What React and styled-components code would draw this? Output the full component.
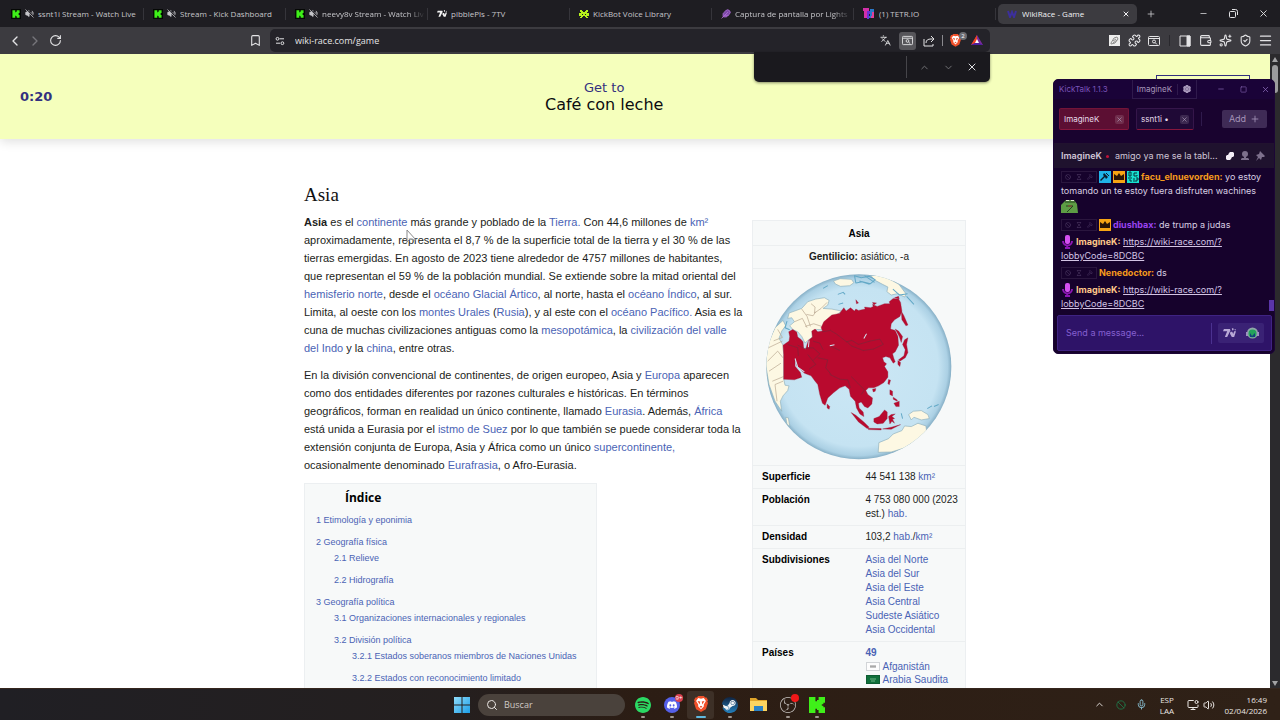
import React from "react";
import styled, { createGlobalStyle, css } from "styled-components";
import {
  ChevronLeft, ChevronRight, RotateCw, Bookmark, VolumeOff, X, Plus, Minus, Languages,
  Puzzle, Wallet, Sparkles, ShieldCheck, Menu, ChevronUp, ChevronDown, Square,
  Settings, Ban, Hourglass, Hammer, Search, Mic, MonitorDot, Volume2, Feather,
} from "lucide-react";
import { SiSpotify, SiDiscord, SiSteam, SiObsstudio } from "react-icons/si";

const ui = `"Open Sans", "Noto Sans", sans-serif`;
const wide = `"DejaVu Sans", Verdana, sans-serif`;
const wiki = `"Liberation Sans", Arial, sans-serif`;
const chat = `Inter, "Noto Sans", sans-serif`;

const GlobalStyle = createGlobalStyle`
  * { box-sizing: border-box; }
  body { margin: 0; background: #fff; font-family: ${wiki}; }
  button { border: 0; padding: 0; margin: 0; background: none; color: inherit; font: inherit; }
  input { font: inherit; }
  ul, ol, h1, h2, p { margin: 0; padding: 0; }
  ul, ol { list-style: none; }
  svg { display: block; flex: none; }
`;

const Screen = styled.div`
  position: relative;
  display: flex;
  flex-direction: column;
  height: 100vh;
  overflow: hidden;
`;

/* ---------- browser chrome ---------- */

const TabStrip = styled.div`
  flex: none;
  display: flex;
  align-items: center;
  height: 27px;
  padding: 0 7px 0 2px;
  background: #1e1d22;
  color: #c6c6ca;
  font: 8px/12px ${ui};
`;

const Tab = styled.div`
  flex: 0 1 142px;
  min-width: 0;
  display: flex;
  align-items: center;
  gap: 4px;
  height: 20px;
  padding: 0 3px 0 9px;
  ${(p) =>
    p.$active
      ? css`
          flex-basis: 139px;
          gap: 5px;
          margin-left: 2px;
          padding-right: 7px;
          border-radius: 5px;
          background: #3c3b40;
          color: #f2f2f4;
        `
      : css`
          background: linear-gradient(#36353b, #36353b) right center / 1px 12px no-repeat;
        `}
`;

const TabTitle = styled.span`
  flex: 1;
  min-width: 0;
  overflow: hidden;
  white-space: nowrap;
  ${(p) => p.$fade && css`
    mask-image: linear-gradient(to right, #000 84%, transparent 100%);
  `}
`;

const IconButton = styled.button`
  flex: none;
  display: flex;
  align-items: center;
  justify-content: center;
  width: ${(p) => p.$w || 20}px;
  height: ${(p) => p.$h || 18}px;
  border-radius: 3px;
  color: ${(p) => p.$color || "inherit"};
  background: ${(p) => p.$bg || "transparent"};
`;

const WindowButtons = styled.div`
  display: flex;
  gap: 10px;
  margin-left: auto;
  color: #e2e2e4;
`;

const Toolbar = styled.div`
  flex: none;
  display: flex;
  align-items: center;
  height: 27px;
  padding: 0 5px;
  background: #3c3b40;
  color: #e4e4e6;
`;

const Navigation = styled.div`
  flex: 0 1 265px;
  display: flex;
  align-items: center;
  padding-right: 5px;
  > :last-child { margin-left: auto; }
`;

const AddressBar = styled.div`
  flex: 1 1 720px;
  min-width: 0;
  display: flex;
  align-items: center;
  height: 23px;
  padding: 0 3px 0 5px;
  border-radius: 5px;
  background: #242329;
`;

const AddressInput = styled.input`
  flex: 1;
  min-width: 0;
  margin-left: 10px;
  padding: 0;
  border: 0;
  background: none;
  color: #e4e4e6;
  font: 9px/14px ${ui};
`;

const BarRule = styled.span`
  flex: none;
  width: 1px;
  height: ${(p) => p.$h || 11}px;
  margin: 0 ${(p) => p.$gap || 0}px;
  background: ${(p) => p.$color || "#5a595e"};
`;

const ShieldBadge = styled.span`
  position: absolute;
  top: 0;
  right: 0;
  width: 8px;
  height: 8px;
  border-radius: 4px;
  background: #6c6c72;
  color: #fff;
  font: 6px/8px ${ui};
  text-align: center;
`;

const BadgeHost = styled.span`
  position: relative;
  display: flex;
  align-items: center;
  justify-content: center;
  width: 24px;
  height: 18px;
`;

const Extensions = styled.div`
  flex: 0 1 285px;
  display: flex;
  align-items: center;
  justify-content: flex-end;
`;

const FindBar = styled.form`
  position: absolute;
  top: 52px;
  right: 290px;
  z-index: 3;
  display: flex;
  align-items: center;
  width: 236px;
  height: 30px;
  padding: 0 1px 0 10px;
  border-radius: 0 0 5px 5px;
  background: #1a191e;
  color: #77777c;
  box-shadow: 0 1px 3px rgba(0, 0, 0, 0.45);
`;

const FindInput = styled.input`
  flex: 1;
  min-width: 0;
  border: 0;
  background: none;
  color: #e4e4e6;
  font: 9px/14px ${ui};
`;

/* ---------- page ---------- */

const Viewport = styled.div`
  flex: 1;
  min-height: 0;
  display: flex;
  overflow: hidden;
`;

const Page = styled.main`
  flex: 1;
  min-width: 0;
  overflow: hidden;
  background: #fff;
`;

const Scrollbar = styled.div`
  flex: none;
  display: flex;
  flex-direction: column;
  align-items: center;
  width: 10px;
  padding: 3px 0 2px;
  background: #2b2a2d;
  color: #a2a2a4;
`;

const ScrollThumb = styled.div`
  width: 6px;
  height: 28px;
  margin: 3px 0 auto;
  border-radius: 3px;
  background: #9c9c9e;
`;

const GameHeader = styled.header`
  display: flex;
  align-items: center;
  justify-content: space-between;
  height: 85px;
  padding: 0 20px;
  background: #f5ffbc;
  box-shadow: 0 3px 10px rgba(0, 0, 0, 0.12);
  font-family: ${wide};
  color: #33307f;
`;

const Timer = styled.div`
  font-weight: bold;
  font-size: 13px;
  line-height: 16px;
`;

const Goal = styled.div`
  padding-bottom: 2px;
  text-align: center;
  font-size: 13px;
  line-height: 17px;
  strong {
    display: block;
    color: #0c0c10;
    font-weight: normal;
    font-size: 16px;
  }
`;

const GiveUp = styled.button`
  width: 94px;
  height: 43px;
  border: 1px solid #33307f;
`;

const Article = styled.article`
  max-width: 662px;
  margin: 0 auto;
  padding-top: 44px;
  color: #1c1d20;
`;

const ArticleTitle = styled.h1`
  font: normal 19px/24px "Liberation Serif", Georgia, serif;
  color: #111;
`;

const Columns = styled.div`
  display: grid;
  grid-template-columns: minmax(0, 1fr) 214px;
  gap: 8px;
  padding-top: 6px;
`;

const Prose = styled.p`
  margin-bottom: 9px;
  font-size: 11px;
  line-height: 18px;
  white-space: nowrap;
`;

const Link = styled.a`
  color: #4a63b5;
  text-decoration: none;
`;

const Toc = styled.nav`
  width: 293px;
  padding: 6px 0 6px 11px;
  border: 1px solid #eceff1;
  background: #f7f9f9;
  font-size: 9px;
  line-height: 16px;
  white-space: nowrap;
`;

const TocTitle = styled.h2`
  padding-left: 29px;
  margin-bottom: 6px;
  font: bold 12px/16px "Open Sans", sans-serif;
  color: #000;
`;

const TocItem = styled.li`
  > a { display: block; margin-bottom: ${(p) => (p.$parent ? 0 : 6)}px; }
  > ol { padding-left: 18px; }
`;

const Infobox = styled.table`
  align-self: start;
  width: 100%;
  margin-top: 7px;
  border: 1px solid #eceff1;
  border-collapse: collapse;
  table-layout: fixed;
  background: #f7f9f9;
  font-size: 10px;
  line-height: 14px;
  th, td {
    padding: 4px 9px;
    border-bottom: 1px solid #eceff0;
    vertical-align: top;
    text-align: left;
    color: #1c1d20;
  }
  th { color: #000; }
  td { padding-left: 0; padding-right: 4px; }
`;

const LabelCol = styled.col`
  width: 113px;
`;

const WideCell = styled.td`
  && {
    padding: ${(p) => p.$pad}px 0;
    text-align: center;
  }
  svg { margin: 0 auto; }
`;

const WideHead = styled.th`
  && {
    padding: 6px 0 4px;
    text-align: center;
  }
`;

const Country = styled.li`
  display: flex;
  align-items: center;
  gap: 3px;
  height: 13px;
`;

const Cursor = styled.svg`
  position: absolute;
  top: 229px;
  left: 406px;
`;

/* ---------- chat window ---------- */

const ChatWindow = styled.section`
  position: absolute;
  top: 79px;
  right: 5px;
  z-index: 4;
  display: flex;
  flex-direction: column;
  width: 222px;
  height: 275px;
  border: 1px solid #1c0637;
  border-radius: 5px;
  background: #16022c;
  color: #d9cfe2;
  font: 9px/14px ${chat};
  overflow: hidden;
`;

const ChatTitleBar = styled.div`
  flex: none;
  display: flex;
  height: 19px;
  padding: 0 3px 0 5px;
  background: #1a0338;
  color: #7b54b8;
  font-size: 8px;
  line-height: 18px;
`;

const Account = styled.div`
  display: flex;
  align-items: center;
  width: 65px;
  margin-left: 24px;
  padding-left: 4px;
  border: 1px solid #2f1a4c;
  border-top: 0;
  color: #a797ba;
`;

const ChatTabs = styled.div`
  flex: none;
  display: flex;
  align-items: center;
  height: 44px;
  padding: 0 7px 4px 5px;
  background: #19032f;
`;

const ChatTab = styled.div`
  display: flex;
  align-items: center;
  justify-content: space-between;
  width: ${(p) => p.$w}px;
  height: 22px;
  margin-right: 7px;
  padding: 0 4px;
  border: 1px solid ${(p) => (p.$on ? "#731438" : "#35164a")};
  border-bottom-color: #86163d;
  border-radius: 2px;
  background: ${(p) => (p.$on ? "#5c0f33" : "#1f0936")};
  color: #e6dcea;
  font-size: 8px;
`;

const CloseTab = styled.button`
  display: flex;
  align-items: center;
  justify-content: center;
  width: 9px;
  height: 9px;
  border-radius: 2px;
  background: rgba(255, 255, 255, 0.13);
  color: #b7a5c3;
`;

const AddButton = styled.button`
  display: flex;
  align-items: center;
  justify-content: center;
  gap: 4px;
  width: 45px;
  height: 18px;
  margin-left: auto;
  border-radius: 2px;
  background: #3f2b56;
  color: #a594b8;
`;

const StreamInfo = styled.div`
  flex: none;
  display: flex;
  align-items: center;
  height: 25px;
  padding: 0 9px 0 7px;
  border-top: 1px solid #21122f;
  background: #1f122e;
  color: #cfc5d6;
`;

const StreamTitle = styled.span`
  flex: 1;
  padding-left: 6px;
`;

const StreamName = styled.span`
  font-weight: 600;
`;

const LiveDot = styled.span`
  width: 3px;
  height: 3px;
  margin-left: 4px;
  border-radius: 2px;
  background: #c01339;
`;

const InfoIcons = styled.div`
  display: flex;
  gap: 5px;
  color: #7d708c;
`;

const Messages = styled.ul`
  flex: 1;
  padding: 2px 6px 0 7px;
  background: linear-gradient(#5a35a8, #5a35a8) right bottom 4px / 5px 11px no-repeat;
`;

const Message = styled.li`
  padding-bottom: 3px;
  a { color: #d3c4e4; text-decoration: underline; }
`;

const Author = styled.b`
  color: ${(p) => p.$color};
  font-weight: 700;
`;

const Inline = styled.span`
  display: inline-flex;
  vertical-align: top;
  align-items: center;
  gap: 2px;
  height: 14px;
  margin-right: 2px;
`;

const ModTools = styled.span`
  display: flex;
  align-items: center;
  justify-content: space-around;
  width: 36px;
  height: 12px;
  border: 1px solid #2a163e;
  color: #513d66;
`;

const Emote = styled.div`
  height: 17px;
  padding-top: 1px;
`;

const Composer = styled.form`
  flex: none;
  display: flex;
  align-items: center;
  height: 36px;
  margin: 0 2px 2px 3px;
  padding: 0 7px 0 8px;
  border: 1px solid #3f2383;
  border-radius: 2px;
  background: #2e1368;
`;

const ComposerInput = styled.input`
  flex: 1;
  min-width: 0;
  padding: 0;
  border: 0;
  background: none;
  color: #d9cfe2;
  &::placeholder { color: #8560d0; opacity: 1; }
`;

const EmoteButtons = styled.div`
  display: flex;
  margin-left: 6px;
  border-radius: 2px;
  background: #3a2275;
`;

/* ---------- taskbar ---------- */

const Taskbar = styled.footer`
  flex: none;
  display: grid;
  grid-template-columns: 1fr auto 1fr;
  align-items: center;
  height: 32px;
  background: linear-gradient(to right, #201f24 0, #241f1f 35%, #2c1d14 50%, #2f2117 100%);
  border-top: 1px solid #35261d;
  color: #eae6e3;
  font: 8px/11px ${ui};
`;

const Apps = styled.div`
  grid-column: 2;
  display: flex;
  align-items: center;
  gap: 2px;
  padding-left: 4px;
`;

const TaskSearch = styled.label`
  display: flex;
  align-items: center;
  gap: 6px;
  width: 147px;
  height: 22px;
  margin: 0 2px 0 6px;
  padding: 0 8px;
  border-radius: 11px;
  background: #4a423c;
  input {
    width: 100%;
    padding: 0;
    border: 0;
    background: none;
    color: inherit;
    font-size: 9px;
    &::placeholder { color: #cfcac6; opacity: 1; }
  }
`;

const AppButton = styled.button`
  position: relative;
  display: flex;
  align-items: center;
  justify-content: center;
  width: 27px;
  height: 28px;
  border-radius: 3px;
  background: ${(p) => (p.$active ? "#3d3027" : "transparent")};
  &::after {
    content: "";
    position: absolute;
    bottom: 1px;
    left: calc(50% - ${(p) => (p.$active ? 5 : 2)}px);
    width: ${(p) => (p.$active ? 10 : 4)}px;
    height: ${(p) => (p.$idle ? 0 : 2)}px;
    border-radius: 1px;
    background: ${(p) => (p.$active ? "#5fb9e0" : "#a09790")};
  }
`;

const AppBadge = styled.span`
  position: absolute;
  top: 3px;
  right: 2px;
  min-width: 8px;
  height: 8px;
  border-radius: 4px;
  background: ${(p) => p.$color};
  color: #fff;
  font: 6px/8px ${ui};
`;

const Tray = styled.div`
  grid-column: 3;
  display: flex;
  align-items: center;
  justify-content: flex-end;
  padding-right: 13px;
  text-align: center;
`;

const TrayItem = styled.div`
  display: flex;
  align-items: center;
  justify-content: center;
  width: ${(p) => p.$w || 21}px;
  color: ${(p) => p.$color || "inherit"};
`;

const Clock = styled.time`
  width: 52px;
  text-align: right;
`;

/* ---------- drawings ---------- */

const KickPath = "M1 1h4v3h1V3h1V1h4v4H10v1H9v1h1v1h1v4H7v-2H6V9H5v3H1z";

const KickLogo = ({ size = 10, bg = true }) => (
  <svg width={size} height={size} viewBox={bg ? "-1 -1 14 15" : "1 1 10 11"} preserveAspectRatio="none">
    {bg && <rect x="-1" y="-1" width="14" height="15" fill="#050805" />}
    <path d={KickPath} fill="#3ff019" />
  </svg>
);

const SevenTv = ({ w = 10, color = "#f2f2f2" }) => (
  <svg width={w} height={w * 0.8} viewBox="0 0 28 22" fill={color}>
    <path d="M2 2h13l1 3-7 14H4L9 7H0z" />
    <path d="M19 1l3-1 1 4-3 1zM16 8h4l2 5 2-6h4l-4 12h-5l-4-7z" />
    <path d="M25 2l3 1-1 2-2-1z" />
  </svg>
);

const KickBot = () => (
  <svg width="10" height="10" viewBox="0 0 10 10" fill="#b6f01c">
    <path d="M1 1h2v1h1v1h2V2h1V1h2v2H8v1h2v3H8v1h1v1H7V8H6V7H4v1H3v1H1V8h1V7H0V4h2V3H1z" />
    <path d="M3 5h1v1H3zM6 5h1v1H6z" fill="#1e1d22" />
  </svg>
);

const Tetrio = () => (
  <svg width="12" height="11" viewBox="0 0 12 11">
    <path d="M0 0h6v3H4v7H1V3H0z" fill="#d22fa9" />
    <path d="M4 3h4v3H6v5H4z" fill="#6b2fd6" />
    <path d="M7 1h4v3H9v6H6V8h1z" fill="#2a78c9" />
    <path d="M9 4h2v6H8V8h1z" fill="#e0409a" />
  </svg>
);

const WikiRaceMark = () => (
  <svg width="10" height="8" viewBox="0 0 10 8" fill="none" stroke="#3c2f9c" strokeWidth="2">
    <path d="M1 1l2 6 2-5 2 5 2-6" />
  </svg>
);

const FindPage = ({ size = 12 }) => (
  <svg width={size} height={size} viewBox="0 0 12 12" fill="none" stroke="currentColor">
    <rect x="0.500" y="1.500" width="11" height="9" rx="1" />
    <path d="M1 3.500h10" />
    <circle cx="6" cy="6.500" r="1.500" />
    <path d="M7 7.500l2 2" />
  </svg>
);

const SiteSettings = () => (
  <svg width="10" height="10" viewBox="0 0 10 10" fill="none" stroke="currentColor">
    <circle cx="2.500" cy="2.800" r="1.400" />
    <path d="M4.500 2.800H9M1 7.200h4" />
    <circle cx="7.400" cy="7.200" r="1.400" />
  </svg>
);

const ShareArrow = () => (
  <svg width="12" height="12" viewBox="0 0 12 12" fill="none" stroke="currentColor">
    <path d="M1 4v7h9V9M3 8c0-3 2-4 5-4h3M8 1l3 3-3 3" />
  </svg>
);

const SidePanel = () => (
  <svg width="12" height="12" viewBox="0 0 12 12" fill="none" stroke="currentColor">
    <path d="M1 1h10v10H1z" />
    <path d="M8 1h3v10H8z" fill="currentColor" />
  </svg>
);

const RestoreWindow = () => (
  <svg width="9" height="9" viewBox="0 0 9 9" fill="none" stroke="currentColor">
    <rect x="0.500" y="2.500" width="6" height="6" rx="1" />
    <path d="M3 0.500h3.500a2 2 0 0 1 2 2V6" />
  </svg>
);

const BatTriangle = () => (
  <svg width="12" height="11" viewBox="0 0 12 11">
    <path d="M6 0L0 10h12z" fill="#7a2a9c" />
    <path d="M6 0L0 10l6-3z" fill="#f0431e" />
    <path d="M0 10h12L6 7z" fill="#4a1d9e" />
    <path d="M6 4L4 8h4z" fill="#fff" />
  </svg>
);

const BraveLion = ({ size = 12 }) => (
  <svg width={size} height={size * 1.15} viewBox="0 0 20 23">
    <path d="M6 0h8l2 2h2l2 4-1 2 1 2-3 9-7 4-7-4-3-9 1-2-1-2 2-4h2z" fill="#f0502a" />
    <path d="M10 4l4-1 3 4-3 5v3l-4 4-4-4v-3L3 7l3-4z" fill="#fff" />
    <path d="M5 7l4 1-1 4zM15 7l-4 1 1 4zM8 15l2-1 2 1-2 2z" fill="#f0502a" />
  </svg>
);

const ImageTile = () => (
  <svg width="11" height="11" viewBox="0 0 11 11">
    <rect width="11" height="11" fill="#ededed" />
    <path d="M2 8l3-5 3-1 1 2-3 4-4 1zM4 6l3-2M4 8l4-3" fill="none" stroke="#8c8c8c" />
  </svg>
);

const Arrow = ({ down }) => (
  <svg width="6" height="5" viewBox="0 0 6 5" fill="currentColor">
    <path d={down ? "M0 0h6L3 5z" : "M3 0l3 5H0z"} />
  </svg>
);

const Globe = () => (
  <svg width="186" height="186" viewBox="65 179 557 557" role="img" aria-label="Mapa de Asia">
    <defs>
      <radialGradient id="sea" cx="0.5" cy="0.5" r="0.5">
        <stop offset="0" stopColor="#cbe7f5" />
        <stop offset="0.86" stopColor="#c5e3f2" />
        <stop offset="0.96" stopColor="#abd0e4" />
        <stop offset="1" stopColor="#86afc6" />
      </radialGradient>
      <clipPath id="disc"><circle cx="343" cy="457" r="277" /></clipPath>
    </defs>
    <circle cx="343" cy="457" r="277" fill="url(#sea)" />
    <g clipPath="url(#disc)" strokeLinejoin="round">
      <g fill="#fdf8e3" stroke="#8fb0bd" strokeWidth="2">
        <path d="M267 200L287 193L321 195L328 205L316 214L288 216L273 209Z" />
        <path d="M379 184L413 182L463 210L484 238L481 248L458 238L440 242L427 232L430 218L414 210L392 198Z" />
        <path d="M172 282L190 262L214 254L240 250L254 258L250 272L236 282L262 284L292 290L272 304L244 322L236 346L215 345L203 352L204 368L190 378L182 386L172 366L160 352L146 346L136 334L150 322L142 310L130 312L134 296Z" />
        <path d="M116 318L124 334L112 350L104 372L116 392L118 420L118 494L122 512L134 514L130 528L116 544L108 560L112 590L92 560L74 510L64 450L70 390L92 340Z" />
        <path d="M124 608L132 610L136 636L128 628Z" />
        <path d="M401 713L403 684L432 672L446 658L472 648L480 634L500 636L520 626L544 634L546 650L520 674L480 700L440 712Z" />
        <path d="M492 600L506 590L530 588L550 600L554 612L530 616L508 608L500 616Z" />
      </g>
      <path d="M200 268l12 10-2 18 20-14 18-18M172 284l16 22 10 30M150 322l24-10 14 28M186 300l20 4 8-12M182 336l26-8 24 8M100 345l14 24-26 10M72 400l42-20M70 440l30-30 16 20M74 470l36-24M84 500l34-14M98 560l-6-50 24-10" fill="none" stroke="#b7a58e" strokeWidth="2" />
      <path d="M330 184l20 6 24-4 18 10-14 12-24-6-20 4zM345 200l30 10M360 184l30 20M445 224l20 18 24-4M486 246l22 24M236 222l14-8M280 240l16-6 6 6M282 270l14-4M548 582l14-8M568 576l14-6M470 596l4 16M128 320l-6 20 14 6" fill="none" stroke="#62a8c6" strokeWidth="3" />
      <g fill="#b90a2e" stroke="#96203c" strokeWidth="1">
        <path d="M133 352L145 345L157 353L160 368L170 375L176 382L178 402L184 404L188 390L192 378L204 368L202 350L212 344L220 352L234 350L230 340L238 322L262 302L285 297L298 280L305 290L318 280L330 290L334 284L342 288L362 284L360 278L378 280L386 276L384 270L398 276L420 268L436 268L434 262L446 252L462 254L468 264L472 290L466 306L450 316L440 328L438 344L452 348L460 366L462 392L452 412L444 418L448 432L452 442L446 446L436 430L424 426L414 430L418 442L426 448L420 456L430 472L430 488L418 504L402 514L388 520L372 520L364 528L370 540L384 550L382 568L370 580L360 576L350 562L342 566L344 580L356 592L358 606L346 598L336 580L332 560L318 545L314 524L302 514L286 520L268 534L250 550L242 572L234 566L226 540L220 510L212 500L200 484L180 476L166 462L158 456L152 432L152 455L168 474L172 488L150 496L118 494L118 420L116 392L134 380L136 366Z" />
        <path d="M470 290L478 304L490 332L484 334L472 316Z" />
        <path d="M452 344L462 350L474 366L470 384L464 366Z" />
        <path d="M480 376L490 370L486 390L490 414L482 430L466 440L462 436L478 424L482 406L474 390Z" />
        <path d="M460 438L468 444L466 456L460 450ZM432 495L438 497L434 511L430 507ZM248 568L256 576L254 584L248 580ZM384 524L394 522L392 530L386 532Z" />
        <path d="M320 594L334 602L358 622L374 638L368 642L342 622ZM370 641L410 642L410 646L372 645Z" />
        <path d="M388 612L404 606L420 586L428 592L428 612L416 626L398 628L388 622Z" />
        <path d="M432 606L440 600L452 598L442 606L450 612L444 614L450 626L442 620L436 628ZM436 526L444 530L444 544L436 540ZM448 566L464 560L464 576L454 576ZM446 548L458 556L458 560L446 554ZM414 643L440 638L468 630L440 644Z" />
        <path d="M334 256L342 266L336 268ZM384 264L396 266L388 272ZM450 250L462 246L464 254Z" />
      </g>
      <path d="M234 352l24-4 20 12 28 22 16-4 20 12 34-10 30-6 10 16-30 14-30 4-36-14-14-14M256 394l30 14M160 392l20 10 26-2 20 18-20 20M190 420l24 30-20 14M220 430l30 6-6 24 16 20M256 480l30 14 24 2 8 24M320 486l20 20 20 20-10 14M130 390l30 10 2 24M206 380l20 6 10 20" fill="none" stroke="#7b2539" strokeWidth="2" />
      <path d="M366 358l-8 14M194 378l-2 20M256 394l14-3M152 432l8 26 20 14" fill="none" stroke="#cfe6f2" strokeWidth="3" />
    </g>
  </svg>
);

const Flag = ({ green }) => (
  <svg width="14" height="9" viewBox="0 0 14 9">
    <rect x="0.500" y="0.500" width="13" height="8" fill={green ? "#10703b" : "#fdfdfd"} stroke={green ? "#0e5d33" : "#d2d5d8"} />
    <path d={green ? "M4 4h6M5 6h4" : "M4 4h6M4 5h6"} stroke={green ? "#6fb488" : "#8d8d8d"} />
  </svg>
);

const BadgeTile = ({ kind }) => (
  <svg width="12" height="12" viewBox="0 0 12 12">
    {kind === "mod" && (<><rect width="12" height="12" fill="#1fb3e8" /><path d="M5 2l4 4-2 2-1-2-4 4-1-1 4-4-1-1z" fill="#0a1a2c" /><path d="M7 2l3 3" stroke="#0a1a2c" /></>)}
    {kind === "crown" && (<><rect width="12" height="12" fill="#f7a413" /><path d="M1 3l3 2 2-3 2 3 3-2v6H1z" fill="#2b1505" /></>)}
    {kind === "og" && (<><rect width="12" height="12" fill="#17e0d0" /><path d="M2 1h2v4H2zM7 2h3M7 2v3h3V4M1 7h4M2 9h2v2M7 7v4M9 7h2v2H9v2" fill="none" stroke="#07353c" /></>)}
  </svg>
);

const HostMic = () => (
  <svg width="13" height="14" viewBox="-1 0 13 14">
    <rect x="3" y="0" width="5" height="9" rx="2" fill="#d34ff0" />
    <path d="M1 6c0 6 9 6 9 0M5 10v2M3 13h5" fill="none" stroke="#8d16b5" strokeWidth="2" />
  </svg>
);

const Frog = () => (
  <svg width="17" height="14" viewBox="0 0 17 14">
    <path d="M1 5l4-4 8 0 3 4 1 9H0V6z" fill="#5d9c45" />
    <path d="M5 1h3v1H5zM10 1h3v1h-3z" fill="#d9e8cc" />
    <path d="M4 3h10M5 7l7 0-3 3M9 10l-3 3" fill="none" stroke="#24431f" />
    <path d="M7 6h4v2H7z" fill="#6a5a34" />
  </svg>
);

const BotFace = ({ size = 13 }) => (
  <svg width={size} height={size} viewBox="0 0 13 13">
    <circle cx="6.500" cy="6" r="5.500" fill="#8fa6a9" />
    <circle cx="6.500" cy="6.500" r="4" fill="#23a35c" />
    <path d="M4 6l2 3 3-3v4H4z" fill="#13407c" />
    <path d="M0 5h2v4H0zM11 5h2v4h-2z" fill="#9c93bf" />
  </svg>
);

const Windows = () => (
  <svg width="16" height="16" viewBox="0 0 16 16">
    <defs><linearGradient id="win" x2="1" y2="1"><stop stopColor="#8fdcfb" /><stop offset="1" stopColor="#1c9fe8" /></linearGradient></defs>
    <path d="M0 0h7.500v7.500H0zM8.500 0H16v7.500H8.500zM0 8.500h7.500V16H0zM8.500 8.500H16V16H8.500z" fill="url(#win)" />
  </svg>
);

const Folder = () => (
  <svg width="17" height="15" viewBox="0 0 17 15">
    <path d="M0 1h6l2 2h9v11H0z" fill="#e0a52a" />
    <path d="M0 4h17v10H0z" fill="#fbd460" />
    <path d="M4 9h9v5H4z" fill="#2b83c6" />
  </svg>
);

const DiscordDisc = () => (
  <svg width="16" height="16" viewBox="0 0 16 16">
    <circle cx="8" cy="8" r="8" fill="#5560e8" />
    <g transform="translate(3 3)"><SiDiscord size={10} color="#fff" /></g>
  </svg>
);

const SteamDisc = () => (
  <svg width="16" height="16" viewBox="0 0 16 16">
    <defs><linearGradient id="steam" y2="1" x2="0"><stop stopColor="#11233f" /><stop offset="1" stopColor="#2380bd" /></linearGradient></defs>
    <circle cx="8" cy="8" r="7" fill="#f1f5f8" />
    <SiSteam size={16} color="url(#steam)" fill="url(#steam)" />
  </svg>
);

const Follow = () => (
  <svg width="10" height="10" viewBox="0 0 10 10" fill="#f4eef7">
    <path d="M5 1h3l1 1v3L8 6H7L6 8 5 9H2L1 8V5l1-1h1l1-2z" />
  </svg>
);

const Viewer = () => (
  <svg width="10" height="10" viewBox="0 0 10 10" fill="currentColor">
    <circle cx="5" cy="3" r="3" />
    <path d="M4 5h2v2h2l1 1v1H1V8l1-1h2z" />
  </svg>
);

const Pushpin = () => (
  <svg width="10" height="10" viewBox="0 0 10 10" fill="currentColor">
    <path d="M5 0l5 5-1 1-2 0-1 3-2-2-3 3 2-4-2-2 3-1z" />
  </svg>
);

/* ---------- content ---------- */

const tabs = [
  { icon: <KickLogo />, muted: true, title: "ssnt1i Stream - Watch Live" },
  { icon: <KickLogo />, muted: true, title: "Stream - Kick Dashboard" },
  { icon: <KickLogo />, muted: true, title: "neevy8v Stream - Watch Liv", fade: true },
  { icon: <SevenTv />, title: "pibblePls - 7TV" },
  { icon: <KickBot />, title: "KickBot Voice Library" },
  { icon: <Feather size={10} color="#b06fd8" fill="#7d4aa8" />, title: "Captura de pantalla por Lights", fade: true },
  { icon: <Tetrio />, title: "(1) TETR.IO" },
];

const toc = [
  { t: "1 Etimología y eponimia" },
  { t: "2 Geografía física", sub: [{ t: "2.1 Relieve" }, { t: "2.2 Hidrografía" }] },
  {
    t: "3 Geografía política",
    sub: [
      { t: "3.1 Organizaciones internacionales y regionales" },
      {
        t: "3.2 División política",
        sub: [
          { t: "3.2.1 Estados soberanos miembros de Naciones Unidas" },
          { t: "3.2.2 Estados con reconocimiento limitado" },
        ],
      },
    ],
  },
];

const regions = ["Asia del Norte", "Asia del Sur", "Asia del Este", "Asia Central", "Sudeste Asiático", "Asia Occidental"];

const A = ({ children }) => <Link href="#">{children}</Link>;

const TocList = ({ items }) => (
  <ol>
    {items.map((i) => (
      <TocItem key={i.t} $parent={!!i.sub}>
        <A>{i.t}</A>
        {i.sub && <TocList items={i.sub} />}
      </TocItem>
    ))}
  </ol>
);

const Tools = () => (
  <ModTools><Ban size={6} /><Hourglass size={6} /><Hammer size={6} /></ModTools>
);

const LobbyLink = () => (
  <Message>
    <Inline><HostMic /></Inline>
    <Author $color="#ffc98a">ImagineK:</Author> <a href="#">https://wiki-race.com/?<br />lobbyCode=8DCBC</a>
  </Message>
);

export default function App() {
  return (
    <Screen>
      <GlobalStyle />
      <TabStrip>
        {tabs.map((t) => (
          <Tab key={t.title}>
            {t.icon}
            {t.muted && <VolumeOff size={9} fill="currentColor" />}
            <TabTitle $fade={t.fade}>{t.title}</TabTitle>
          </Tab>
        ))}
        <Tab $active>
          <WikiRaceMark />
          <TabTitle>WikiRace - Game</TabTitle>
          <X size={8} strokeWidth={3} />
        </Tab>
        <IconButton $w={28} aria-label="Nueva pestaña"><Plus size={10} /></IconButton>
        <WindowButtons>
          <IconButton aria-label="Minimizar"><Minus size={9} /></IconButton>
          <IconButton aria-label="Restaurar"><RestoreWindow /></IconButton>
          <IconButton aria-label="Cerrar"><X size={11} /></IconButton>
        </WindowButtons>
      </TabStrip>

      <Toolbar>
        <Navigation>
          <IconButton aria-label="Atrás"><ChevronLeft size={16} /></IconButton>
          <IconButton $color="#77767b" aria-label="Adelante"><ChevronRight size={16} /></IconButton>
          <IconButton aria-label="Recargar"><RotateCw size={13} /></IconButton>
          <IconButton aria-label="Marcador"><Bookmark size={13} /></IconButton>
        </Navigation>
        <AddressBar>
          <SiteSettings />
          <AddressInput aria-label="Dirección" defaultValue="wiki-race.com/game" />
          <IconButton $w={28} aria-label="Traducir"><Languages size={11} /></IconButton>
          <IconButton $w={17} $bg="#56555a" aria-label="Buscar en la página"><FindPage size={11} /></IconButton>
          <IconButton $w={26} aria-label="Compartir"><ShareArrow /></IconButton>
          <BarRule $color="#8a898e" />
          <BadgeHost><BraveLion size={11} /><ShieldBadge>2</ShieldBadge></BadgeHost>
          <IconButton aria-label="Recompensas"><BatTriangle /></IconButton>
        </AddressBar>
        <Extensions>
          <IconButton aria-label="Lightshot"><ImageTile /></IconButton>
          <IconButton aria-label="Extensiones"><Puzzle size={13} /></IconButton>
          <IconButton aria-label="Buscar"><FindPage /></IconButton>
          <BarRule $gap={5} $color="#29282d" />
          <IconButton aria-label="Panel lateral"><SidePanel /></IconButton>
          <IconButton aria-label="Cartera"><Wallet size={13} /></IconButton>
          <IconButton aria-label="Leo"><Sparkles size={13} /></IconButton>
          <IconButton aria-label="VPN"><ShieldCheck size={13} /></IconButton>
          <IconButton aria-label="Menú"><Menu size={15} /></IconButton>
        </Extensions>
      </Toolbar>

      <FindBar>
        <FindInput aria-label="Buscar texto" />
        <BarRule $h={22} $color="#46454a" />
        <IconButton type="button" $w={34} aria-label="Anterior"><ChevronUp size={11} /></IconButton>
        <IconButton type="button" $w={14} aria-label="Siguiente"><ChevronDown size={11} /></IconButton>
        <IconButton type="button" $w={34} $color="#dcdce0" aria-label="Cerrar búsqueda"><X size={12} /></IconButton>
      </FindBar>

      <Viewport>
        <Page>
          <GameHeader>
            <Timer>0:20</Timer>
            <Goal>Get to<strong>Café con leche</strong></Goal>
            <GiveUp aria-label="Rendirse" />
          </GameHeader>
          <Article>
            <ArticleTitle>Asia</ArticleTitle>
            <Columns>
              <div>
                <Prose>
                  <b>Asia</b> es el <A>continente</A> más grande y poblado de la <A>Tierra.</A> Con 44,6 millones de <A>km²</A><br />
                  aproximadamente, representa el 8,7 % de la superficie total de la tierra y el 30 % de las<br />
                  tierras emergidas. En agosto de 2023 tiene alrededor de 4757 millones de habitantes,<br />
                  que representan el 59 % de la población mundial. Se extiende sobre la mitad oriental del<br />
                  <A>hemisferio norte</A>, desde el <A>océano Glacial Ártico</A>, al norte, hasta el <A>océano Índico</A>, al sur.<br />
                  Limita, al oeste con los <A>montes Urales</A> (<A>Rusia</A>), y al este con el <A>océano Pacífico.</A> Asia es la<br />
                  cuna de muchas civilizaciones antiguas como la <A>mesopotámica</A>, la <A>civilización del valle</A><br />
                  <A>del Indo</A> y la <A>china</A>, entre otras.
                </Prose>
                <Prose>
                  En la división convencional de continentes, de origen europeo, Asia y <A>Europa</A> aparecen<br />
                  como dos entidades diferentes por razones culturales e históricas. En términos<br />
                  geográficos, forman en realidad un único continente, llamado <A>Eurasia</A>. Además, <A>África</A><br />
                  está unida a Eurasia por el <A>istmo de Suez</A> por lo que también se puede considerar toda la<br />
                  extensión conjunta de Europa, Asia y África como un único <A>supercontinente,</A><br />
                  ocasionalmente denominado <A>Eurafrasia</A>, o Afro-Eurasia.
                </Prose>
                <Toc>
                  <TocTitle>Índice</TocTitle>
                  <TocList items={toc} />
                </Toc>
              </div>
              <Infobox>
                <colgroup><LabelCol /><col /></colgroup>
                <tbody>
                  <tr><WideHead colSpan={2}>Asia</WideHead></tr>
                  <tr><WideCell $pad={4} colSpan={2}><b>Gentilicio:</b> asiático, -a</WideCell></tr>
                  <tr><WideCell $pad={5} colSpan={2}><Globe /></WideCell></tr>
                  <tr><th>Superficie</th><td>44 541 138 <A>km²</A></td></tr>
                  <tr><th>Población</th><td>4 753 080 000 (2023<br />est.) <A>hab.</A></td></tr>
                  <tr><th>Densidad</th><td>103,2 <A>hab.</A>/<A>km²</A></td></tr>
                  <tr>
                    <th>Subdivisiones</th>
                    <td><ul>{regions.map((r) => <li key={r}><A>{r}</A></li>)}</ul></td>
                  </tr>
                  <tr>
                    <th>Países</th>
                    <td>
                      <b><A>49</A></b>
                      <ul>
                        <Country><Flag /><A>Afganistán</A></Country>
                        <Country><Flag green /><A>Arabia Saudita</A></Country>
                      </ul>
                    </td>
                  </tr>
                </tbody>
              </Infobox>
            </Columns>
          </Article>
        </Page>
        <Scrollbar><Arrow /><ScrollThumb /><Arrow down /></Scrollbar>
      </Viewport>

      <Cursor width="11" height="16" viewBox="0 0 11 16">
        <path d="M1 1v12l3-3 4 1h2z" fill="#fff" fillOpacity="0.7" stroke="#8b8b8b" />
      </Cursor>

      <ChatWindow>
        <ChatTitleBar>
          KickTalk 1.1.3
          <Account>ImagineK<BarRule $gap={5} $color="#2f1a4c" /><Settings size={8} strokeWidth={5} /></Account>
          <WindowButtons>
            <IconButton $w={12} $color="#8b6bb8" aria-label="Minimizar chat"><Minus size={8} /></IconButton>
            <IconButton $w={12} $color="#8b6bb8" aria-label="Maximizar chat"><Square size={7} /></IconButton>
            <IconButton $w={12} $color="#8b6bb8" aria-label="Cerrar chat"><X size={9} /></IconButton>
          </WindowButtons>
        </ChatTitleBar>
        <ChatTabs>
          <ChatTab $on $w={70}>ImagineK<CloseTab aria-label="Cerrar ImagineK"><X size={7} /></CloseTab></ChatTab>
          <ChatTab $w={58}>ssnt1i •<CloseTab aria-label="Cerrar ssnt1i"><X size={7} /></CloseTab></ChatTab>
          <BarRule $h={14} $color="#2f1a4c" />
          <AddButton>Add <Plus size={10} /></AddButton>
        </ChatTabs>
        <StreamInfo>
          <StreamName>ImagineK</StreamName><LiveDot />
          <StreamTitle>amigo ya me se la tabl...</StreamTitle>
          <InfoIcons><Follow /><Viewer /><Pushpin /></InfoIcons>
        </StreamInfo>
        <Messages>
          <Message>
            <Inline><Tools /><BadgeTile kind="mod" /><BadgeTile kind="crown" /><BadgeTile kind="og" /></Inline>
            <Author $color="#f59a1c">facu_elnuevorden:</Author> yo estoy<br />tomando un te estoy fuera disfruten wachines
            <Emote><Frog /></Emote>
          </Message>
          <Message>
            <Inline><Tools /><BadgeTile kind="crown" /></Inline>
            <Author $color="#9a44f0">diushbax:</Author> de trump a judas
          </Message>
          <LobbyLink />
          <Message>
            <Inline><Tools /></Inline>
            <Author $color="#f59a1c">Nenedoctor:</Author> ds
          </Message>
          <LobbyLink />
        </Messages>
        <Composer>
          <ComposerInput aria-label="Mensaje" placeholder="Send a message..." />
          <BarRule $h={21} $color="#4b3190" />
          <EmoteButtons>
            <IconButton type="button" $w={23} $h={20} aria-label="Emotes 7TV"><SevenTv w={13} color="#b9a9d6" /></IconButton>
            <IconButton type="button" $w={23} $h={20} aria-label="Emotes Kick"><BotFace /></IconButton>
          </EmoteButtons>
        </Composer>
      </ChatWindow>

      <Taskbar>
        <Apps>
          <Windows />
          <TaskSearch><Search size={12} /><input aria-label="Buscar" placeholder="Buscar" /></TaskSearch>
          <AppButton aria-label="Spotify"><SiSpotify size={16} color="#2bd964" /></AppButton>
          <AppButton aria-label="Discord"><DiscordDisc /><AppBadge $color="#d8404f">9+</AppBadge></AppButton>
          <AppButton $active aria-label="Brave"><BraveLion size={14} /></AppButton>
          <AppButton aria-label="Steam"><SteamDisc /></AppButton>
          <AppButton $idle aria-label="Explorador"><Folder /></AppButton>
          <AppButton aria-label="OBS"><SiObsstudio size={16} color="#c9c5c2" /><AppBadge $color="#f01818" /></AppButton>
          <AppButton aria-label="Kick"><KickLogo size={16} bg={false} /></AppButton>
        </Apps>
        <Tray>
          <TrayItem><ChevronUp size={11} /></TrayItem>
          <TrayItem $color="#1f7a4a"><Ban size={10} /></TrayItem>
          <TrayItem $color="#8cc4d8"><Mic size={11} /></TrayItem>
          <TrayItem $w={30}>ESP<br />LAA</TrayItem>
          <TrayItem><MonitorDot size={12} /></TrayItem>
          <TrayItem $w={12}><Volume2 size={12} /></TrayItem>
          <Clock>16:49<br />02/04/2026</Clock>
        </Tray>
      </Taskbar>
    </Screen>
  );
}
